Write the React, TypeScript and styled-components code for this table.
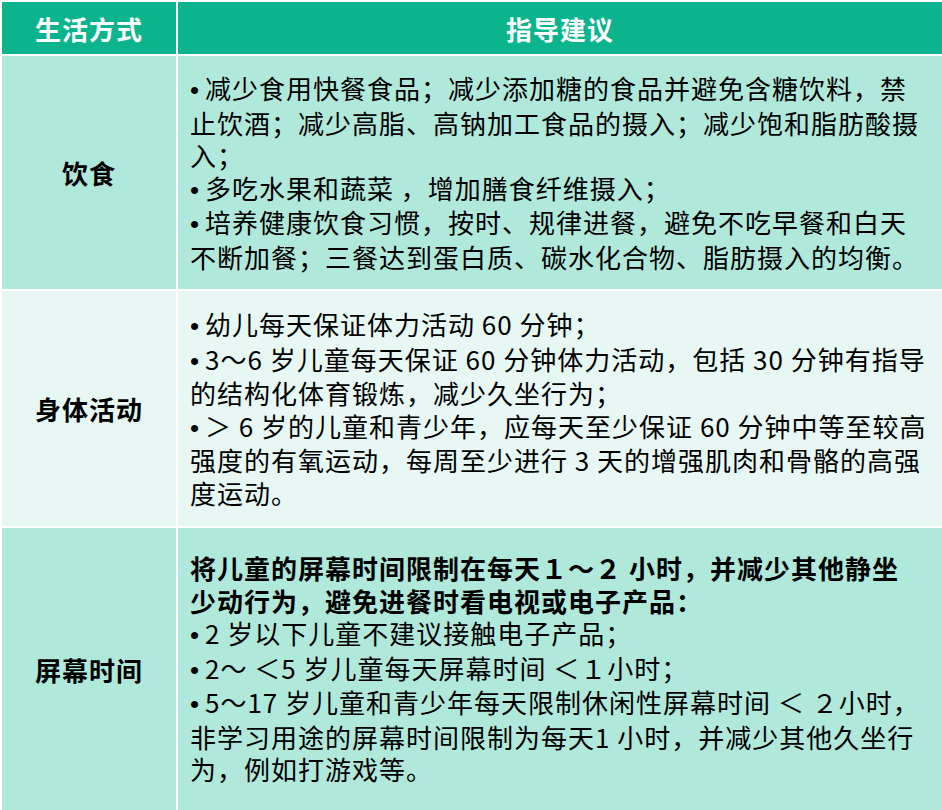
import styled, { createGlobalStyle } from "styled-components";

const GlobalStyle = createGlobalStyle`
    html, body {
        margin: 0;
        padding: 0;
        background: #ffffff;
    }
    body {
        font-family: "Noto Sans CJK SC", "Noto Sans", sans-serif;
        color: #000000;
    }
`;

interface Line {
    text: string;
    bold?: boolean;
}

interface Row {
    label: string;
    tone: "dark" | "light";
    height: number;
    lines: Line[];
}

const rows: Row[] = [
    {
        label: "饮食",
        tone: "dark",
        height: 233,
        lines: [
            { text: "• 减少食用快餐食品；减少添加糖的食品并避免含糖饮料，禁" },
            { text: "止饮酒；减少高脂、高钠加工食品的摄入；减少饱和脂肪酸摄" },
            { text: "入；" },
            { text: "• 多吃水果和蔬菜 ，增加膳食纤维摄入；" },
            { text: "• 培养健康饮食习惯，按时、规律进餐，避免不吃早餐和白天" },
            { text: "不断加餐；三餐达到蛋白质、碳水化合物、脂肪摄入的均衡。" },
        ],
    },
    {
        label: "身体活动",
        tone: "light",
        height: 235,
        lines: [
            { text: "• 幼儿每天保证体力活动 60 分钟；" },
            { text: "• 3～6 岁儿童每天保证 60 分钟体力活动，包括 30 分钟有指导" },
            { text: "的结构化体育锻炼，减少久坐行为；" },
            { text: "• ＞ 6 岁的儿童和青少年，应每天至少保证 60 分钟中等至较高" },
            { text: "强度的有氧运动，每周至少进行 3 天的增强肌肉和骨骼的高强" },
            { text: "度运动。" },
        ],
    },
    {
        label: "屏幕时间",
        tone: "dark",
        height: 282,
        lines: [
            { text: "将儿童的屏幕时间限制在每天１～２ 小时，并减少其他静坐", bold: true },
            { text: "少动行为，避免进餐时看电视或电子产品：", bold: true },
            { text: "• 2 岁以下儿童不建议接触电子产品；" },
            { text: "• 2～ ＜5 岁儿童每天屏幕时间 ＜１小时；" },
            { text: "• 5～17 岁儿童和青少年每天限制休闲性屏幕时间 ＜ ２小时，" },
            { text: "非学习用途的屏幕时间限制为每天1 小时，并减少其他久坐行" },
            { text: "为，例如打游戏等。" },
        ],
    },
];

function renderLine(text: string) {
    if (text.startsWith("• ")) {
        return (
            <>
                <Bullet>•</Bullet>
                {text.slice(2)}
            </>
        );
    }
    return text;
}

function App() {
    return (
        <>
            <GlobalStyle />
            <Table>
                <HeaderCell>生活方式</HeaderCell>
                <HeaderCell>指导建议</HeaderCell>
                {rows.map((row) => (
                    <RowGroup key={row.label}>
                        <LabelCell $tone={row.tone} $height={row.height}>
                            {row.label}
                        </LabelCell>
                        <ContentCell $tone={row.tone} $height={row.height}>
                            {row.lines.map((line, i) => (
                                <TextLine key={i} $bold={line.bold}>
                                    {renderLine(line.text)}
                                </TextLine>
                            ))}
                        </ContentCell>
                    </RowGroup>
                ))}
            </Table>
        </>
    );
}

const toneColor = {
    dark: "#b0e8dc",
    light: "#e6f7f4",
};

const Table = styled.div`
    display: grid;
    grid-template-columns: 174px 764px;
    gap: 2px;
    padding: 2px 0 0 2px;
    width: 940px;
    background: #ffffff;
`;

const RowGroup = styled.div`
    display: contents;
`;

const HeaderCell = styled.div`
    height: 52px;
    background: #0cb48e;
    color: #ffffff;
    font-size: 26px;
    font-weight: 700;
    letter-spacing: 1px;
    display: flex;
    align-items: center;
    justify-content: center;
`;

const LabelCell = styled.div<{ $tone: "dark" | "light"; $height: number }>`
    height: ${(p) => p.$height}px;
    background: ${(p) => toneColor[p.$tone]};
    font-size: 26px;
    font-weight: 700;
    letter-spacing: 1px;
    display: flex;
    align-items: center;
    justify-content: center;
`;

const ContentCell = styled.div<{ $tone: "dark" | "light"; $height: number }>`
    height: ${(p) => p.$height}px;
    background: ${(p) => toneColor[p.$tone]};
    padding: 0 12px;
    box-sizing: border-box;
    display: flex;
    flex-direction: column;
    justify-content: center;
`;

const TextLine = styled.div<{ $bold?: boolean }>`
    font-size: 26px;
    letter-spacing: 1px;
    line-height: 32.5px;
    white-space: nowrap;
    font-weight: ${(p) => (p.$bold ? 700 : 400)};
`;

const Bullet = styled.span`
    font-family: "Liberation Sans", sans-serif;
    display: inline-block;
    width: 15px;
    letter-spacing: 0;
`;

export default App;
